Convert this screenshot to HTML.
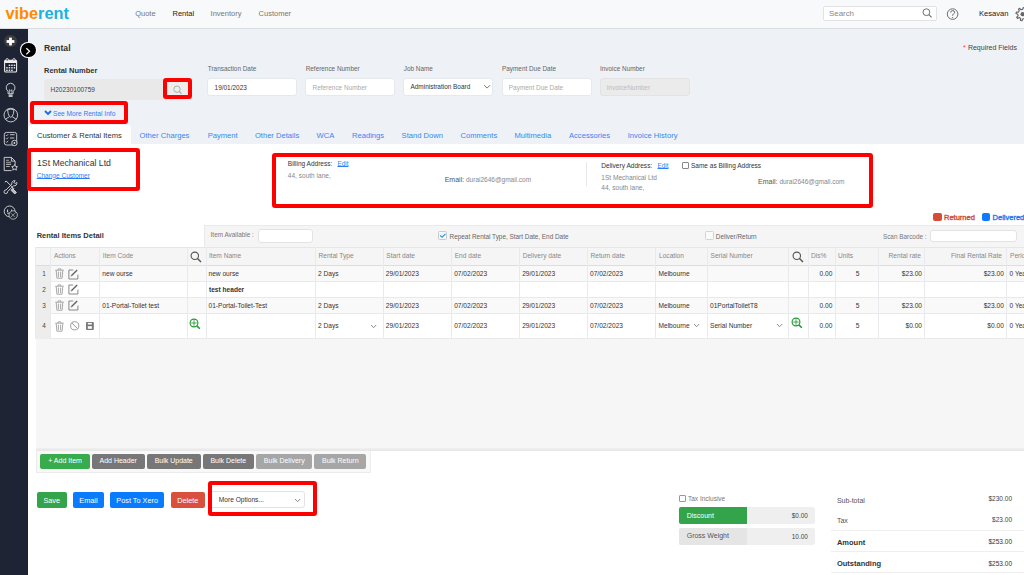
<!DOCTYPE html>
<html><head><meta charset="utf-8"><title>Rental</title>
<style>
html,body{margin:0;padding:0;width:1024px;height:575px;overflow:hidden;background:#fff;}
body{position:relative;font-family:"Liberation Sans",sans-serif;}
.t{position:absolute;line-height:1;white-space:nowrap;}
.r{position:absolute;}
.btn{position:absolute;color:#fff;text-align:center;border-radius:2px;white-space:nowrap;}
</style></head><body>
<div class="r" style="left:0.00px;top:0.00px;width:1024.00px;height:28.00px;background:#f8f9fa;"></div>
<div class="r" style="left:0.00px;top:28.00px;width:1024.00px;height:3.00px;background:linear-gradient(#d3d6db,#e4e7eb 45%,#eef1f5);"></div>
<div class="r" style="left:28.00px;top:29.00px;width:996.00px;height:546.00px;background:#eef1f5;"></div>
<div class="r" style="left:0.00px;top:29.00px;width:28.00px;height:546.00px;background:#1e2433;"></div>
<div class="t" style="left:5.5px;top:4.95px;font-size:16.3px;font-weight:bold;"><span style="color:#ff8a00">vibe</span><span style="color:#1bb1e0">rent</span></div>
<div class="t" style="left:135.20px;top:10.00px;font-size:7.5px;color:#777;">Quote</div>
<div class="t" style="left:172.50px;top:10.00px;font-size:7.5px;color:#222;">Rental</div>
<div class="t" style="left:210.60px;top:10.00px;font-size:7.5px;color:#777;">Inventory</div>
<div class="t" style="left:258.60px;top:10.00px;font-size:7.5px;color:#777;">Customer</div>
<div class="r" style="left:822.50px;top:5.50px;width:114.10px;height:15.90px;background:#fff;border:1px solid #e2e2e2;border-radius:2px;box-sizing:border-box;"></div>
<div class="t" style="left:829.00px;top:10.00px;font-size:7.9px;color:#888;">Search</div>
<svg class="r" style="left:918px;top:4px" width="46" height="20" viewBox="918 4 46 20" fill="none" stroke="#666" stroke-width="0.95"><circle cx="926.4" cy="12.2" r="3.4"/><path d="M928.9 14.7L931.6 17.4" stroke-width="1.1"/><circle cx="952.6" cy="14.1" r="5.3"/><path d="M950.7 12.6Q950.7 10.6 952.7 10.6Q954.6 10.6 954.6 12.3Q954.6 13.5 953.3 14.1Q952.6 14.5 952.6 15.7" stroke-width="1"/><circle cx="952.6" cy="17.6" r="0.6" fill="#666" stroke="none"/></svg>
<div class="t" style="left:979.00px;top:10.00px;font-size:7.6px;color:#222;">Kesavan</div>
<svg class="r" style="left:1000px;top:4px" width="24" height="20" viewBox="0 0 24 20" fill="none" stroke="#666" stroke-width="1.15" stroke-linejoin="round"><path d="M27.40 10.20 L29.17 10.82 L28.84 12.34 L26.97 12.18 L25.99 13.59 L26.81 15.29 L25.50 16.13 L24.30 14.69 L22.60 15.00 L21.98 16.77 L20.46 16.44 L20.62 14.57 L19.21 13.59 L17.51 14.41 L16.67 13.10 L18.11 11.90 L17.80 10.20 L16.03 9.58 L16.36 8.06 L18.23 8.22 L19.21 6.81 L18.39 5.11 L19.70 4.27 L20.90 5.71 L22.60 5.40 L23.22 3.63 L24.74 3.96 L24.58 5.83 L25.99 6.81 L27.69 5.99 L28.53 7.30 L27.09 8.50Z"/><circle cx="22.6" cy="10.2" r="2.1" fill="#666" stroke="none"/></svg>
<div class="r" style="left:4.4px;top:34.6px;width:12.8px;height:12.8px;border-radius:50%;background:#3b3b3d;"></div>
<svg class="r" style="left:4.4px;top:34.6px" width="13" height="13" viewBox="0 0 13 13"><rect x="5.1" y="2.6" width="2.8" height="7.8" fill="#fff"/><rect x="2.6" y="5.1" width="7.8" height="2.8" fill="#fff"/></svg>
<svg class="r" style="left:0;top:0" width="28" height="230" viewBox="0 0 28 230" fill="none" stroke="#d6d7db" stroke-width="1"><rect x="4.6" y="60.2" width="12" height="11.8" rx="1.3" stroke="#eee" stroke-width="1.1"/><rect x="4.6" y="60.2" width="12" height="2.8" fill="#eee" stroke="none"/><circle cx="7.2" cy="59.8" r="1.2" fill="#1e2433" stroke="#eee" stroke-width="0.9"/><circle cx="14" cy="59.8" r="1.2" fill="#1e2433" stroke="#eee" stroke-width="0.9"/><rect x="8.7" y="64.6" width="1.5" height="1.4" fill="#eee" stroke="none"/><rect x="11.2" y="64.6" width="1.5" height="1.4" fill="#eee" stroke="none"/><rect x="13.7" y="64.6" width="1.5" height="1.4" fill="#eee" stroke="none"/><rect x="6.2" y="67.1" width="1.5" height="1.4" fill="#eee" stroke="none"/><rect x="8.7" y="67.1" width="1.5" height="1.4" fill="#eee" stroke="none"/><rect x="11.2" y="67.1" width="1.5" height="1.4" fill="#eee" stroke="none"/><rect x="13.7" y="67.1" width="1.5" height="1.4" fill="#eee" stroke="none"/><rect x="6.2" y="69.6" width="1.5" height="1.4" fill="#eee" stroke="none"/><rect x="8.7" y="69.6" width="1.5" height="1.4" fill="#eee" stroke="none"/><rect x="11.2" y="69.6" width="1.5" height="1.4" fill="#eee" stroke="none"/><path d="M10.6 83.2a4.5 4.5 0 0 0-2.6 8.1v2.4h5.2v-2.4a4.5 4.5 0 0 0-2.6-8.1z" stroke-width="0.9"/><path d="M9.3 93.5v-3.8l1.3 1.1 1.3-1.1v3.8" stroke-width="0.8"/><rect x="8.6" y="94.4" width="4" height="2.6" fill="#bbb" stroke="none"/><circle cx="10.8" cy="115.1" r="6.8" stroke-width="0.9"/><path d="M7.6 109.8Q10.8 108.4 14 109.8L13.4 113.6Q12.5 116.9 10.8 117.4Q9.1 116.9 8.2 113.6Z" stroke-width="0.9"/><path d="M5.3 119.4L9.4 116.7M16.3 119.4L12.2 116.7" stroke-width="0.9"/><rect x="4.3" y="132.4" width="12.4" height="12.6" rx="2.2" stroke-width="0.9"/><path d="M5.9 135l0.8 0.8 1.5-1.6M5.9 138.3l0.8 0.8 1.5-1.6M5.9 141.6l0.8 0.8 1.5-1.6" stroke-width="0.8"/><path d="M10 134.7h4.6M10 138h4.2" stroke-width="0.9"/><circle cx="14.4" cy="143" r="2.7" fill="#1e2433" stroke-width="0.9"/><circle cx="14.4" cy="143" r="0.9" fill="#d6d7db" stroke="none"/><path d="M4.2 157.4h7.2l3.7 3.7v4.2M4.2 157.4v13.2h7.4M11.4 157.4v3.7h3.7" stroke-width="0.9"/><path d="M6.1 160.2h2.8M6.1 162.3h5M6.1 164.4h5M6.1 166.5h3.6" stroke="#aaa" stroke-width="1.1"/><path d="M14.6 164.6l0.9 1.8 2 0.3-1.45 1.4 0.35 2-1.8-0.95-1.8 0.95 0.35-2-1.45-1.4 2-0.3z" stroke-width="0.9"/><path d="M4.8 182.2l1.4-1.2 8 8" stroke-width="1"/><path d="M12.6 188.6l3.8 3.8-1.6 1.6-3.8-3.8z" fill="#bbb" stroke-width="0.9"/><path d="M16.8 182.4a2.6 2.6 0 0 1-3.3 3.3L7.6 191.6a1.8 1.8 0 1 1-1.6-1.6l5.9-5.9a2.6 2.6 0 0 1 3.3-3.3l-1.4 1.4 0.6 0.8 0.8 0.6z" stroke-width="0.9"/><circle cx="9.6" cy="211.4" r="5.4" stroke="#ccc" stroke-width="1"/><path d="M7.6 209.6v2.5M11.6 209.6v2.5M7.2 213.2h4.8" stroke="#ddd" stroke-width="1"/><circle cx="13.2" cy="215" r="4.2" fill="#1e2433" stroke="#bbb" stroke-width="0.9"/><path d="M10.6 217.4l5.2-5M11 213.2l3.8 3.8" stroke="#aaa" stroke-width="0.8"/></svg>
<div class="r" style="left:21px;top:42.8px;width:14.6px;height:14.6px;border-radius:50%;background:#000;box-shadow:0 0 0 1.1px #fff;"></div>
<svg class="r" style="left:20px;top:42px" width="16" height="16" viewBox="0 0 16 16"><path d="M6.3 6.2l3.3 3.1-3.3 3.1" fill="none" stroke="#fff" stroke-width="1.2"/></svg>
<div class="t" style="left:44.00px;top:44.00px;font-size:8.7px;color:#333;font-weight:bold;">Rental</div>
<div class="t" style="left:963.00px;top:44.00px;font-size:7px;color:#e44;">*</div>
<div class="t" style="left:967.90px;top:44.00px;font-size:7px;color:#444;">Required Fields</div>
<div class="t" style="left:44.00px;top:67.00px;font-size:7.5px;color:#333;font-weight:bold;">Rental Number</div>
<div class="r" style="left:43.50px;top:79.00px;width:143.50px;height:21.00px;background:#e9e9ea;border-radius:3px;"></div>
<div class="t" style="left:50.50px;top:87.00px;font-size:6.5px;color:#444;">H20230100759</div>
<div class="r" style="left:163.40px;top:77.60px;width:28.60px;height:21.20px;background:#ededed;border:4.4px solid #f00;border-radius:3px;box-sizing:border-box;"></div>
<svg class="r" style="left:170px;top:82px" width="14" height="13" viewBox="170 82 14 13"><circle cx="177" cy="89.2" r="3.2" fill="none" stroke="#aaa" stroke-width="0.95"/><line x1="179.3" y1="91.5" x2="181.6" y2="93.8" stroke="#aaa" stroke-width="1.1"/></svg>
<div class="t" style="left:207.80px;top:66.00px;font-size:6.4px;color:#666;">Transaction Date</div>
<div class="r" style="left:207.40px;top:78.10px;width:90.00px;height:18.10px;background:#fff;border:1px solid #e5e8ec;border-radius:3px;box-sizing:border-box;"></div>
<div class="t" style="left:214.60px;top:85.00px;font-size:6.45px;color:#333;">19/01/2023</div>
<div class="t" style="left:305.70px;top:66.00px;font-size:6.4px;color:#666;">Reference Number</div>
<div class="r" style="left:305.30px;top:78.10px;width:90.00px;height:18.10px;background:#fff;border:1px solid #e5e8ec;border-radius:3px;box-sizing:border-box;"></div>
<div class="t" style="left:312.50px;top:85.00px;font-size:6.45px;color:#aaa;">Reference Number</div>
<div class="t" style="left:403.70px;top:66.00px;font-size:6.4px;color:#666;">Job Name</div>
<div class="r" style="left:403.30px;top:78.10px;width:90.00px;height:18.10px;background:#fff;border:1px solid #e5e8ec;border-radius:3px;box-sizing:border-box;"></div>
<div class="t" style="left:410.50px;top:84.00px;font-size:6.45px;color:#333;">Administration Board</div>
<div class="t" style="left:502.00px;top:66.00px;font-size:6.4px;color:#666;">Payment Due Date</div>
<div class="r" style="left:501.60px;top:78.10px;width:90.00px;height:18.10px;background:#fff;border:1px solid #e5e8ec;border-radius:3px;box-sizing:border-box;"></div>
<div class="t" style="left:508.80px;top:85.00px;font-size:6.45px;color:#aaa;">Payment Due Date</div>
<div class="t" style="left:600.00px;top:66.00px;font-size:6.4px;color:#666;">Invoice Number</div>
<div class="r" style="left:599.60px;top:78.10px;width:90.00px;height:18.10px;background:#ebebeb;border:1px solid #e3e3e3;border-radius:3px;box-sizing:border-box;"></div>
<div class="t" style="left:606.80px;top:85.00px;font-size:6.45px;color:#bbb;">InvoiceNumber</div>
<svg class="r" style="left:483px;top:84.3px" width="8" height="6" viewBox="0 0 8 6"><path d="M1.2 1.2l2.9 2.9 2.9-2.9" fill="none" stroke="#666" stroke-width="0.9"/></svg>
<div class="r" style="left:30.10px;top:101.30px;width:97.60px;height:22.60px;border:4.5px solid #f00;border-radius:3px;box-sizing:border-box;"></div>
<svg class="r" style="left:44px;top:110.3px" width="8" height="6" viewBox="0 0 8 6"><path d="M1 1l3 3 3-3" fill="none" stroke="#1a6ee8" stroke-width="1.9"/></svg>
<div class="t" style="left:53.00px;top:111.00px;font-size:6.6px;color:#2d7ff9;">See More Rental Info</div>
<div class="r" style="left:28.00px;top:124.60px;width:102.80px;height:19.40px;background:#fff;border-radius:3px 3px 0 0;"></div>
<div class="t" style="left:37.00px;top:132.00px;font-size:7.6px;color:#333;">Customer &amp; Rental Items</div>
<div class="t" style="left:139.60px;top:132.00px;font-size:7.6px;color:#3a86f3;">Other Charges</div>
<div class="t" style="left:207.70px;top:132.00px;font-size:7.6px;color:#3a86f3;">Payment</div>
<div class="t" style="left:254.90px;top:132.00px;font-size:7.6px;color:#3a86f3;">Other Details</div>
<div class="t" style="left:316.50px;top:132.00px;font-size:7.6px;color:#3a86f3;">WCA</div>
<div class="t" style="left:352.00px;top:132.00px;font-size:7.6px;color:#3a86f3;">Readings</div>
<div class="t" style="left:401.60px;top:132.00px;font-size:7.6px;color:#3a86f3;">Stand Down</div>
<div class="t" style="left:460.50px;top:132.00px;font-size:7.6px;color:#3a86f3;">Comments</div>
<div class="t" style="left:514.50px;top:132.00px;font-size:7.6px;color:#3a86f3;">Multimedia</div>
<div class="t" style="left:569.00px;top:132.00px;font-size:7.6px;color:#3a86f3;">Accessories</div>
<div class="t" style="left:627.70px;top:132.00px;font-size:7.6px;color:#3a86f3;">Invoice History</div>
<div class="r" style="left:28.00px;top:143.70px;width:996.00px;height:431.30px;background:#fff;"></div>
<div class="r" style="left:27.20px;top:148.10px;width:112.50px;height:43.10px;border:4.4px solid #f00;border-radius:3px;box-sizing:border-box;"></div>
<div class="t" style="left:37.00px;top:159.00px;font-size:8.7px;color:#333;">1St Mechanical Ltd</div>
<div class="t" style="left:36.70px;top:173.00px;font-size:6.55px;color:#2d7ff9;text-decoration:underline;text-underline-offset:0px;">Change Customer</div>
<div class="r" style="left:272.00px;top:152.50px;width:600.70px;height:55.00px;border:4.4px solid #f00;border-radius:3px;box-sizing:border-box;"></div>
<div class="t" style="left:287.80px;top:161.00px;font-size:6.5px;color:#333;">Billing Address:</div>
<div class="t" style="left:337.40px;top:161.00px;font-size:6.4px;color:#2d7ff9;text-decoration:underline;text-underline-offset:0px;">Edit</div>
<div class="t" style="left:287.80px;top:173.00px;font-size:6.55px;color:#888;">44, south lane,</div>
<div class="t" style="left:444.70px;top:176.00px;font-size:7px;color:#555;">Email:</div>
<div class="t" style="left:466.00px;top:177.00px;font-size:6.5px;color:#888;">durai2646@gmail.com</div>
<div class="r" style="left:586.00px;top:162.00px;width:1.00px;height:24.00px;background:#e8e8e8;"></div>
<div class="t" style="left:601.30px;top:163.00px;font-size:6.55px;color:#333;">Delivery Address:</div>
<div class="t" style="left:657.50px;top:163.00px;font-size:6.4px;color:#2d7ff9;text-decoration:underline;text-underline-offset:0px;">Edit</div>
<div class="r" style="left:682.20px;top:162.20px;width:6.60px;height:6.80px;border:1px solid #888;border-radius:1px;box-sizing:border-box;background:#fff;"></div>
<div class="t" style="left:691.00px;top:163.00px;font-size:6.5px;color:#333;">Same as Billing Address</div>
<div class="t" style="left:601.30px;top:175.00px;font-size:6.55px;color:#888;">1St Mechanical Ltd</div>
<div class="t" style="left:601.30px;top:185.00px;font-size:6.55px;color:#888;">44, south lane,</div>
<div class="t" style="left:758.00px;top:178.00px;font-size:7px;color:#555;">Email:</div>
<div class="t" style="left:779.40px;top:179.00px;font-size:6.5px;color:#888;">durai2646@gmail.com</div>
<div class="r" style="left:933.20px;top:213.10px;width:8.40px;height:8.10px;background:#d64b3a;border-radius:2px;"></div>
<div class="t" style="left:944.00px;top:214.00px;font-size:7.5px;color:#d04a3c;-webkit-text-stroke:0.35px #d04a3c;">Returned</div>
<div class="r" style="left:981.60px;top:213.10px;width:8.40px;height:8.10px;background:#0d7bff;border-radius:2px;"></div>
<div class="t" style="left:992.60px;top:214.00px;font-size:7.5px;color:#1a76ee;-webkit-text-stroke:0.35px #1a76ee;">Delivered</div>
<div class="t" style="left:36.70px;top:232.00px;font-size:7.5px;color:#333;font-weight:bold;">Rental Items Detail</div>
<div class="r" style="left:203.80px;top:224.90px;width:820.20px;height:22.40px;background:#f5f5f5;border-left:1px solid #eaeaea;border-top:1px solid #eaeaea;box-sizing:border-box;"></div>
<div class="t" style="left:210.60px;top:232.00px;font-size:6.4px;color:#777;">Item Available :</div>
<div class="r" style="left:257.90px;top:228.60px;width:54.70px;height:14.00px;background:#fff;border:1px solid #e3e3e3;border-radius:3px;box-sizing:border-box;"></div>
<div class="r" style="left:438.40px;top:231.30px;width:8.40px;height:9.10px;background:#f4f7fb;border:1px solid #c9cbce;border-radius:1.5px;box-sizing:border-box;"></div>
<svg class="r" style="left:438.4px;top:231.3px" width="9" height="9" viewBox="0 0 9 9"><path d="M2.2 4.6l1.9 1.6 3.4-3.3" fill="none" stroke="#2d9cdb" stroke-width="1.3"/></svg>
<div class="t" style="left:449.60px;top:234.00px;font-size:6.4px;color:#666;">Repeat Rental Type, Start Date, End Date</div>
<div class="r" style="left:704.90px;top:231.30px;width:8.90px;height:9.10px;background:#fafafa;border:1px solid #d4d4d4;border-radius:1.5px;box-sizing:border-box;"></div>
<div class="t" style="left:715.80px;top:234.00px;font-size:6.4px;color:#666;">Deliver/Return</div>
<div class="t" style="left:882.90px;top:234.00px;font-size:6.4px;color:#777;">Scan Barcode :</div>
<div class="r" style="left:929.80px;top:230.30px;width:87.40px;height:11.90px;background:#fff;border:1px solid #e3e3e3;border-radius:3px;box-sizing:border-box;"></div>
<div class="r" style="left:36.20px;top:247.30px;width:987.80px;height:18.00px;background:#f5f5f5;"></div>
<div class="r" style="left:36.20px;top:246.80px;width:987.80px;height:1.00px;background:#e6e6e6;"></div>
<div class="r" style="left:36.20px;top:264.60px;width:987.80px;height:1.00px;background:#d9dee5;"></div>
<div class="r" style="left:36.20px;top:265.60px;width:987.80px;height:16.60px;background:#f9f9f9;border-bottom:1px solid #e9e9e9;box-sizing:border-box;"></div>
<div class="r" style="left:36.20px;top:282.20px;width:987.80px;height:15.80px;background:#fff;border-bottom:1px solid #e9e9e9;box-sizing:border-box;"></div>
<div class="r" style="left:36.20px;top:298.00px;width:987.80px;height:16.10px;background:#f9f9f9;border-bottom:1px solid #e9e9e9;box-sizing:border-box;"></div>
<div class="r" style="left:36.20px;top:314.10px;width:987.80px;height:25.10px;background:#fff;border-bottom:1px solid #e9e9e9;box-sizing:border-box;"></div>
<div class="r" style="left:36.20px;top:265.60px;width:13.80px;height:73.60px;background:#ededed;"></div>
<div class="r" style="left:36.20px;top:339.20px;width:987.80px;height:109.80px;background:#f6f6f6;"></div>
<div class="r" style="left:35.30px;top:247.30px;width:1.00px;height:91.90px;background:#e8eaed;"></div>
<div class="r" style="left:49.60px;top:247.30px;width:1.00px;height:91.90px;background:#e8eaed;"></div>
<div class="r" style="left:98.90px;top:247.30px;width:1.00px;height:91.90px;background:#e8eaed;"></div>
<div class="r" style="left:186.80px;top:247.30px;width:1.00px;height:91.90px;background:#e8eaed;"></div>
<div class="r" style="left:205.50px;top:247.30px;width:1.00px;height:91.90px;background:#e8eaed;"></div>
<div class="r" style="left:314.50px;top:247.30px;width:1.00px;height:91.90px;background:#e8eaed;"></div>
<div class="r" style="left:382.80px;top:247.30px;width:1.00px;height:91.90px;background:#e8eaed;"></div>
<div class="r" style="left:450.60px;top:247.30px;width:1.00px;height:91.90px;background:#e8eaed;"></div>
<div class="r" style="left:518.70px;top:247.30px;width:1.00px;height:91.90px;background:#e8eaed;"></div>
<div class="r" style="left:586.80px;top:247.30px;width:1.00px;height:91.90px;background:#e8eaed;"></div>
<div class="r" style="left:654.80px;top:247.30px;width:1.00px;height:91.90px;background:#e8eaed;"></div>
<div class="r" style="left:706.50px;top:247.30px;width:1.00px;height:91.90px;background:#e8eaed;"></div>
<div class="r" style="left:788.30px;top:247.30px;width:1.00px;height:91.90px;background:#e8eaed;"></div>
<div class="r" style="left:807.60px;top:247.30px;width:1.00px;height:91.90px;background:#e8eaed;"></div>
<div class="r" style="left:834.50px;top:247.30px;width:1.00px;height:91.90px;background:#e8eaed;"></div>
<div class="r" style="left:877.90px;top:247.30px;width:1.00px;height:91.90px;background:#e8eaed;"></div>
<div class="r" style="left:924.40px;top:247.30px;width:1.00px;height:91.90px;background:#e8eaed;"></div>
<div class="r" style="left:1006.10px;top:247.30px;width:1.00px;height:91.90px;background:#e8eaed;"></div>
<div class="t" style="left:54.00px;top:253.00px;font-size:6.6px;color:#888;">Actions</div>
<div class="t" style="left:102.80px;top:253.00px;font-size:6.6px;color:#888;">Item Code</div>
<div class="t" style="left:209.00px;top:253.00px;font-size:6.6px;color:#888;">Item Name</div>
<div class="t" style="left:318.50px;top:253.00px;font-size:6.6px;color:#888;">Rental Type</div>
<div class="t" style="left:386.30px;top:253.00px;font-size:6.6px;color:#888;">Start date</div>
<div class="t" style="left:454.70px;top:253.00px;font-size:6.6px;color:#888;">End date</div>
<div class="t" style="left:522.70px;top:253.00px;font-size:6.6px;color:#888;">Delivery date</div>
<div class="t" style="left:590.50px;top:253.00px;font-size:6.6px;color:#888;">Return date</div>
<div class="t" style="left:659.00px;top:253.00px;font-size:6.6px;color:#888;">Location</div>
<div class="t" style="left:710.50px;top:253.00px;font-size:6.6px;color:#888;">Serial Number</div>
<div class="t" style="left:811.00px;top:253.00px;font-size:6.6px;color:#888;">Dis%</div>
<div class="t" style="left:838.00px;top:253.00px;font-size:6.6px;color:#888;">Units</div>
<div class="t" style="left:1010.00px;top:253.00px;font-size:6.6px;color:#888;">Perio</div>
<div class="t" style="right:103.20px;top:253.00px;font-size:6.6px;color:#888;">Rental rate</div>
<div class="t" style="right:22.00px;top:253.00px;font-size:6.6px;color:#888;">Final Rental Rate</div>
<svg class="r" style="left:189.7px;top:250.5px" width="12" height="12" viewBox="0 0 12 12"><circle cx="4.8" cy="4.8" r="3.7" fill="none" stroke="#555" stroke-width="1.1"/><line x1="7.5" y1="7.5" x2="11" y2="11" stroke="#555" stroke-width="1.4"/></svg>
<svg class="r" style="left:791.5px;top:250.5px" width="12" height="12" viewBox="0 0 12 12"><circle cx="4.8" cy="4.8" r="3.7" fill="none" stroke="#555" stroke-width="1.1"/><line x1="7.5" y1="7.5" x2="11" y2="11" stroke="#555" stroke-width="1.4"/></svg>
<div class="t" style="left:42.20px;top:271.00px;font-size:6.4px;color:#444;">1</div>
<div class="t" style="left:42.20px;top:287.00px;font-size:6.4px;color:#444;">2</div>
<div class="t" style="left:42.20px;top:303.00px;font-size:6.4px;color:#444;">3</div>
<div class="t" style="left:42.20px;top:323.00px;font-size:6.4px;color:#444;">4</div>
<svg class="r" style="left:55.3px;top:268.4px" width="9" height="11" viewBox="0 0 9 11" fill="none" stroke="#9a9a9a" stroke-width="0.85"><path d="M0.3 2.2h8.4"/><path d="M3 2V1.1Q4.5 0.3 6 1.1V2"/><path d="M1.2 2.4l0.7 7.8h5.2l0.7-7.8"/><path d="M3.4 3.7v5.4M5.6 3.7v5.4"/></svg>
<svg class="r" style="left:67.8px;top:268.6px" width="11" height="11" viewBox="0 0 11 11" fill="none" stroke="#7a7a7a" stroke-width="0.9"><path d="M5.2 1H0.9v9h9V5.6"/><path d="M3.6 6.4L9.2 0.9" stroke="#666" stroke-width="1.45"/><path d="M2.6 7.5l0.5-1.6 1.1 1.1z" fill="#666" stroke="none"/></svg>
<svg class="r" style="left:55.3px;top:284.2px" width="9" height="11" viewBox="0 0 9 11" fill="none" stroke="#9a9a9a" stroke-width="0.85"><path d="M0.3 2.2h8.4"/><path d="M3 2V1.1Q4.5 0.3 6 1.1V2"/><path d="M1.2 2.4l0.7 7.8h5.2l0.7-7.8"/><path d="M3.4 3.7v5.4M5.6 3.7v5.4"/></svg>
<svg class="r" style="left:67.8px;top:284.40000000000003px" width="11" height="11" viewBox="0 0 11 11" fill="none" stroke="#7a7a7a" stroke-width="0.9"><path d="M5.2 1H0.9v9h9V5.6"/><path d="M3.6 6.4L9.2 0.9" stroke="#666" stroke-width="1.45"/><path d="M2.6 7.5l0.5-1.6 1.1 1.1z" fill="#666" stroke="none"/></svg>
<svg class="r" style="left:55.3px;top:300.0px" width="9" height="11" viewBox="0 0 9 11" fill="none" stroke="#9a9a9a" stroke-width="0.85"><path d="M0.3 2.2h8.4"/><path d="M3 2V1.1Q4.5 0.3 6 1.1V2"/><path d="M1.2 2.4l0.7 7.8h5.2l0.7-7.8"/><path d="M3.4 3.7v5.4M5.6 3.7v5.4"/></svg>
<svg class="r" style="left:67.8px;top:300.20000000000005px" width="11" height="11" viewBox="0 0 11 11" fill="none" stroke="#7a7a7a" stroke-width="0.9"><path d="M5.2 1H0.9v9h9V5.6"/><path d="M3.6 6.4L9.2 0.9" stroke="#666" stroke-width="1.45"/><path d="M2.6 7.5l0.5-1.6 1.1 1.1z" fill="#666" stroke="none"/></svg>
<svg class="r" style="left:55.3px;top:320.6px" width="9" height="11" viewBox="0 0 9 11" fill="none" stroke="#9a9a9a" stroke-width="0.85"><path d="M0.3 2.2h8.4"/><path d="M3 2V1.1Q4.5 0.3 6 1.1V2"/><path d="M1.2 2.4l0.7 7.8h5.2l0.7-7.8"/><path d="M3.4 3.7v5.4M5.6 3.7v5.4"/></svg>
<svg class="r" style="left:70px;top:321px" width="10" height="10" viewBox="0 0 10 10" fill="none" stroke="#8a8a8a" stroke-width="0.85"><circle cx="4.7" cy="4.8" r="4.1"/><line x1="1.9" y1="2" x2="7.5" y2="7.6"/></svg>
<svg class="r" style="left:86px;top:321.8px" width="8" height="8" viewBox="0 0 8 8"><rect x="0" y="0" width="7.8" height="7.9" rx="1" fill="#777"/><rect x="1.8" y="0.9" width="4" height="1.6" fill="#fff"/><rect x="1.8" y="4.2" width="4.1" height="2.6" fill="#fff"/></svg>
<svg class="r" style="left:189.1px;top:317.6px" width="12" height="12" viewBox="0 0 12 12" fill="none" stroke="#1f9a32" stroke-width="1.15"><circle cx="5" cy="5" r="3.9"/><line x1="7.9" y1="7.9" x2="10.8" y2="10.8" stroke-width="1.5"/><line x1="2.2" y1="5" x2="7.8" y2="5" stroke-width="0.85"/><line x1="5" y1="2.2" x2="5" y2="7.8" stroke-width="0.85"/></svg>
<svg class="r" style="left:791.1px;top:317.4px" width="12" height="12" viewBox="0 0 12 12" fill="none" stroke="#1f9a32" stroke-width="1.15"><circle cx="5" cy="5" r="3.9"/><line x1="7.9" y1="7.9" x2="10.8" y2="10.8" stroke-width="1.5"/><line x1="2.2" y1="5" x2="7.8" y2="5" stroke-width="0.85"/><line x1="5" y1="2.2" x2="5" y2="7.8" stroke-width="0.85"/></svg>
<div class="t" style="left:102.30px;top:271.00px;font-size:6.6px;color:#333;">new ourse</div>
<div class="t" style="left:208.50px;top:271.00px;font-size:6.6px;color:#333;">new ourse</div>
<div class="t" style="left:318.00px;top:271.00px;font-size:6.6px;color:#333;">2 Days</div>
<div class="t" style="left:385.80px;top:271.00px;font-size:6.6px;color:#333;">29/01/2023</div>
<div class="t" style="left:454.20px;top:271.00px;font-size:6.6px;color:#333;">07/02/2023</div>
<div class="t" style="left:522.20px;top:271.00px;font-size:6.6px;color:#333;">29/01/2023</div>
<div class="t" style="left:590.00px;top:271.00px;font-size:6.6px;color:#333;">07/02/2023</div>
<div class="t" style="left:658.50px;top:271.00px;font-size:6.6px;color:#333;">Melbourne</div>
<div class="t" style="right:191.70px;top:271.00px;font-size:6.6px;color:#333;">0.00</div>
<div class="t" style="right:164.50px;top:271.00px;font-size:6.6px;color:#333;">5</div>
<div class="t" style="right:102.00px;top:271.00px;font-size:6.6px;color:#333;">$23.00</div>
<div class="t" style="right:20.20px;top:271.00px;font-size:6.6px;color:#333;">$23.00</div>
<div class="t" style="left:1009.50px;top:271.00px;font-size:6.6px;color:#333;">0 Yea</div>
<div class="t" style="left:209.00px;top:287.00px;font-size:6.6px;color:#333;font-weight:bold;">test header</div>
<div class="t" style="left:102.30px;top:303.00px;font-size:6.6px;color:#333;">01-Portal-Toilet test</div>
<div class="t" style="left:208.50px;top:303.00px;font-size:6.6px;color:#333;">01-Portal-Toilet-Test</div>
<div class="t" style="left:318.00px;top:303.00px;font-size:6.6px;color:#333;">2 Days</div>
<div class="t" style="left:385.80px;top:303.00px;font-size:6.6px;color:#333;">29/01/2023</div>
<div class="t" style="left:454.20px;top:303.00px;font-size:6.6px;color:#333;">07/02/2023</div>
<div class="t" style="left:522.20px;top:303.00px;font-size:6.6px;color:#333;">29/01/2023</div>
<div class="t" style="left:590.00px;top:303.00px;font-size:6.6px;color:#333;">07/02/2023</div>
<div class="t" style="left:658.50px;top:303.00px;font-size:6.6px;color:#333;">Melbourne</div>
<div class="t" style="left:710.00px;top:303.00px;font-size:6.6px;color:#333;">01PortalToiletT8</div>
<div class="t" style="right:191.70px;top:303.00px;font-size:6.6px;color:#333;">0.00</div>
<div class="t" style="right:164.50px;top:303.00px;font-size:6.6px;color:#333;">5</div>
<div class="t" style="right:102.00px;top:303.00px;font-size:6.6px;color:#333;">$23.00</div>
<div class="t" style="right:20.20px;top:303.00px;font-size:6.6px;color:#333;">$23.00</div>
<div class="t" style="left:1009.50px;top:303.00px;font-size:6.6px;color:#333;">0 Yea</div>
<div class="t" style="left:318.00px;top:323.00px;font-size:6.6px;color:#333;">2 Days</div>
<div class="t" style="left:385.80px;top:323.00px;font-size:6.6px;color:#333;">29/01/2023</div>
<div class="t" style="left:454.20px;top:323.00px;font-size:6.6px;color:#333;">07/02/2023</div>
<div class="t" style="left:522.20px;top:323.00px;font-size:6.6px;color:#333;">29/01/2023</div>
<div class="t" style="left:590.00px;top:323.00px;font-size:6.6px;color:#333;">07/02/2023</div>
<div class="t" style="left:658.50px;top:323.00px;font-size:6.6px;color:#333;">Melbourne</div>
<div class="t" style="left:710.00px;top:323.00px;font-size:6.6px;color:#333;">Serial Number</div>
<div class="t" style="right:191.70px;top:323.00px;font-size:6.6px;color:#333;">0.00</div>
<div class="t" style="right:164.50px;top:323.00px;font-size:6.6px;color:#333;">5</div>
<div class="t" style="right:102.00px;top:323.00px;font-size:6.6px;color:#333;">$0.00</div>
<div class="t" style="right:20.20px;top:323.00px;font-size:6.6px;color:#333;">$0.00</div>
<div class="t" style="left:1009.50px;top:323.00px;font-size:6.6px;color:#333;">0 Yea</div>
<svg class="r" style="left:369.5px;top:323.5px" width="7" height="5" viewBox="0 0 7 5"><path d="M1 1l2.6 2.7L6.2 1" fill="none" stroke="#777" stroke-width="0.85"/></svg>
<svg class="r" style="left:693.4px;top:323.2px" width="7" height="5" viewBox="0 0 7 5"><path d="M1 1l2.6 2.7L6.2 1" fill="none" stroke="#777" stroke-width="0.85"/></svg>
<svg class="r" style="left:775.6px;top:323px" width="7" height="5" viewBox="0 0 7 5"><path d="M1 1l2.6 2.7L6.2 1" fill="none" stroke="#777" stroke-width="0.85"/></svg>
<div class="r" style="left:36.20px;top:450.00px;width:334.80px;height:22.60px;background:#f8f8f9;border:1px solid #ececec;border-top:none;box-sizing:border-box;"></div>
<div class="r" style="left:36.20px;top:448.00px;width:987.80px;height:3.00px;background:linear-gradient(#f0f0f0,#e6e6e6);"></div>
<div class="btn" style="left:40.3px;top:454.3px;width:49.50px;height:14.5px;background:#38ab4c;font-size:7px;line-height:14.8px;">+ Add Item</div>
<div class="btn" style="left:91.8px;top:454.3px;width:52.80px;height:14.5px;background:#777;font-size:7px;line-height:14.8px;">Add Header</div>
<div class="btn" style="left:146.8px;top:454.3px;width:53.80px;height:14.5px;background:#777;font-size:7px;line-height:14.8px;">Bulk Update</div>
<div class="btn" style="left:202.6px;top:454.3px;width:51.40px;height:14.5px;background:#777;font-size:7px;line-height:14.8px;">Bulk Delete</div>
<div class="btn" style="left:256.2px;top:454.3px;width:56.20px;height:14.5px;background:#a6a6a6;font-size:7px;line-height:14.8px;">Bulk Delivery</div>
<div class="btn" style="left:314.3px;top:454.3px;width:52.00px;height:14.5px;background:#a6a6a6;font-size:7px;line-height:14.8px;">Bulk Return</div>
<div class="btn" style="left:36.6px;top:491.8px;width:30.30px;height:16.1px;background:#34a44a;font-size:7.3px;line-height:17.6px;">Save</div>
<div class="btn" style="left:72.5px;top:491.8px;width:31.90px;height:16.1px;background:#0b7bfe;font-size:7.3px;line-height:17.6px;">Email</div>
<div class="btn" style="left:110.2px;top:491.8px;width:54.00px;height:16.1px;background:#0b7bfe;font-size:7.3px;line-height:17.6px;">Post To Xero</div>
<div class="btn" style="left:170.7px;top:491.8px;width:34.10px;height:16.1px;background:#d9503f;font-size:7.3px;line-height:17.6px;">Delete</div>
<div class="r" style="left:209.00px;top:491.40px;width:96.20px;height:16.20px;background:#fff;border:1px solid #e3e3e3;border-radius:3px;box-sizing:border-box;"></div>
<div class="r" style="left:207.60px;top:481.20px;width:109.40px;height:34.80px;border:4.4px solid #f00;border-radius:3px;box-sizing:border-box;"></div>
<div class="t" style="left:218.80px;top:497.00px;font-size:6.6px;color:#333;">More Options...</div>
<svg class="r" style="left:294.4px;top:497.5px" width="7" height="5" viewBox="0 0 7 5"><path d="M1 1l2.6 2.7L6.2 1" fill="none" stroke="#777" stroke-width="0.85"/></svg>
<div class="r" style="left:678.60px;top:495.20px;width:7.00px;height:6.80px;background:#fff;border:1px solid #999;border-radius:1px;box-sizing:border-box;"></div>
<div class="t" style="left:688.00px;top:496.00px;font-size:6.5px;color:#777;">Tax Inclusive</div>
<div class="r" style="left:678.90px;top:507.20px;width:136.30px;height:16.80px;background:#efefef;border-radius:2px;"></div>
<div class="r" style="left:678.90px;top:507.20px;width:68.00px;height:16.80px;background:#34a44a;border-radius:2px 0 0 2px;"></div>
<div class="t" style="left:686.70px;top:512.00px;font-size:7px;color:#fff;">Discount</div>
<div class="t" style="right:216.20px;top:513.00px;font-size:6.4px;color:#444;">$0.00</div>
<div class="r" style="left:678.90px;top:527.50px;width:136.30px;height:17.20px;background:#efefef;border-radius:2px;"></div>
<div class="r" style="left:678.90px;top:527.50px;width:68.00px;height:17.20px;background:#e5e5e5;border-radius:2px 0 0 2px;"></div>
<div class="t" style="left:686.70px;top:532.00px;font-size:7px;color:#555;">Gross Weight</div>
<div class="t" style="right:216.20px;top:534.00px;font-size:6.4px;color:#444;">10.00</div>
<div class="t" style="left:836.90px;top:497.00px;font-size:7px;color:#555;">Sub-total</div>
<div class="t" style="right:12.00px;top:496.00px;font-size:6.5px;color:#444;">$230.00</div>
<div class="t" style="left:836.90px;top:517.00px;font-size:7px;color:#555;">Tax</div>
<div class="t" style="right:12.00px;top:517.00px;font-size:6.5px;color:#444;">$23.00</div>
<div class="r" style="left:831.20px;top:530.00px;width:192.80px;height:1.00px;background:#eeeeee;"></div>
<div class="t" style="left:836.90px;top:539.00px;font-size:7.5px;color:#333;font-weight:bold;">Amount</div>
<div class="t" style="right:12.00px;top:539.00px;font-size:6.5px;color:#333;">$253.00</div>
<div class="r" style="left:831.20px;top:551.20px;width:192.80px;height:1.00px;background:#eeeeee;"></div>
<div class="t" style="left:836.90px;top:560.00px;font-size:7.5px;color:#333;font-weight:bold;">Outstanding</div>
<div class="t" style="right:12.00px;top:561.00px;font-size:6.5px;color:#333;">$253.00</div>
<div class="r" style="left:831.20px;top:572.30px;width:192.80px;height:1.00px;background:#eeeeee;"></div>
</body></html>
